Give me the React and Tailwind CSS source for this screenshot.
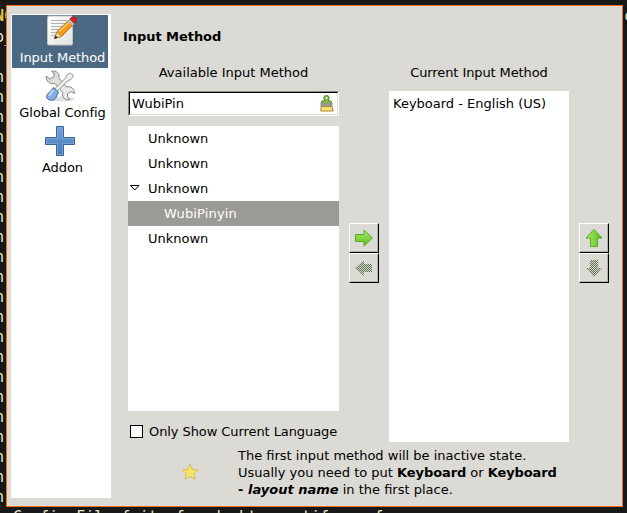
const outputRows = Array.from({ length: 22 }, () => "n");

function Terminal() {
  return (
    <div className="absolute inset-0 overflow-hidden bg-[#181818] font-['DejaVu_Sans_Mono',monospace] text-[15px] leading-[20px] text-[#eeeac8]">
      <div className="absolute top-[6px] left-[-5px] font-bold text-[#e8c84a]">NC</div>
      <div className="absolute top-[27px] left-[-5px]">o_</div>
      <div className="absolute top-[67px] left-[-5px]">
        {outputRows.map((g, i) => (
          <div key={i} className="h-[20px]">{g}</div>
        ))}
      </div>
      <div className="absolute top-[6px] left-[624px]">c</div>
      <div className="absolute top-[507px] left-[13px] whitespace-pre">Config File fcitx-freedesktop-notify.conf</div>
    </div>
  );
}

function NoteIcon() {
  return (
    <svg width="32" height="32" viewBox="0 0 32 32">
      <defs>
        <linearGradient id="pg" x1="0" y1="0" x2="1" y2="1">
          <stop offset="0" stopColor="#fff" />
          <stop offset="1" stopColor="#e2e2e0" />
        </linearGradient>
      </defs>
      <rect x="1.500" y="1" width="25" height="29" rx="1.500" fill="url(#pg)" stroke="#c3c4c0" />
      <path d="M5 5.500h16M5 8.500h14M5 11.500h12M5 14.500h10M5 17.500h7M5 20.500h4" stroke="#b0b2ae" />
      <path d="M8.500 23.500l2.500-7L23.500 4.500l4.500 4.500-12.500 12.500z" fill="#f59a1c" stroke="#a65f08" strokeWidth=".8" />
      <path d="M13 16.500L24.500 6" stroke="#ffc978" strokeWidth="1.600" />
      <path d="M8.500 23.500l2.500-6.500 4.500 4.500z" fill="#f3d9a8" stroke="#a1752d" strokeWidth=".6" />
      <path d="M8.200 23.800l1.300-3.300 2.300 2.100z" fill="#222" />
      <path d="M21.800 6l2.200-2.200 4.700 4.700-2.200 2.200z" fill="#b9bdc4" />
      <path d="M23.800 4q2.500-3.500 5.500-1.300 2.300 2.800-.7 5.800z" fill="#dc1f20" stroke="#98120f" strokeWidth=".7" />
    </svg>
  );
}

function ToolsIcon() {
  return (
    <svg width="32" height="32" viewBox="0 0 32 32">
      <defs>
        <linearGradient id="st" x1="0" y1="0" x2="1" y2="1">
          <stop offset="0" stopColor="#d3d5d0" />
          <stop offset="1" stopColor="#f1f1ee" />
        </linearGradient>
      </defs>
      <ellipse cx="18" cy="29" rx="12" ry="2.500" fill="#000" opacity=".13" />
      <path d="M2 6l4 3 4-2.500V3L7.500 1.500c5-1.500 8.500 2 7.300 6.500l7.700 9c4-1.300 8 1.500 8 6.500l-3.500-2-3.500 2v3.500l2.500 2.500c-4.500 1.300-8.500-2-7.300-7L11 13.500C6 14.800 2 11.500 2 6z" fill="url(#st)" stroke="#858882" />
      <path d="M26.500 3l3 3-2.800 3.700-2.700.8L13 21.500 10.500 19 21.500 8l1-2.800z" fill="#eeeeec" stroke="#92958e" />
      <path d="M9.500 17.500l5 4.500-3 6.500c-2 3-9 2-9-2 0-2.500 4.500-5 7-9z" fill="#87aee3" stroke="#3466a8" />
      <path d="M9.500 20l-4.500 6" stroke="#c5dbf6" strokeWidth="1.800" />
    </svg>
  );
}

function PlusIcon() {
  return (
    <svg width="32" height="32" viewBox="0 0 32 32">
      <defs>
        <linearGradient id="bl" x1="0" y1="0" x2="0" y2="1">
          <stop offset="0" stopColor="#76a3d2" />
          <stop offset="1" stopColor="#4679b5" />
        </linearGradient>
      </defs>
      <path d="M12.500 1.500h7v11h11v7h-11v11h-7v-11h-11v-7h11z" fill="url(#bl)" stroke="#3465a4" />
      <path d="M13.500 2.500h5v11h11v5h-11v11h-5v-11h-11v-5h11z" fill="none" stroke="#8bb2dc" opacity=".6" />
    </svg>
  );
}

function BrushIcon() {
  return (
    <svg width="14" height="17" viewBox="0 0 14 17">
      <path d="M4.500 6V5Q2.500 .7 6.500 .6 10.500 .7 8.500 5v1h2.500l1 2.500H1L2 6z" fill="#86b84a" stroke="#4f8a24" />
      <circle cx="6.500" cy="3" r="1" fill="#eef7e2" />
      <path d="M.5 8h12v3.500H.5z" fill="#969893" />
      <path d="M1 11.500h11l1.200 4.500H.8z" fill="#f3e07a" stroke="#b08a2c" />
    </svg>
  );
}

function Arrow({ turn, off }) {
  const id = "arrow" + turn;
  return (
    <svg width="20" height="20" viewBox="0 0 20 20">
      <defs>
        <linearGradient id={id} x1="0" y1="0" x2="0" y2="1">
          <stop offset="0" stopColor="#b0ee6c" />
          <stop offset="1" stopColor="#57bd1c" />
        </linearGradient>
        <pattern id={id + "d"} width="2" height="2" patternUnits="userSpaceOnUse">
          <path d="M0 0h1v1H0zM1 1h1v1H1z" fill="#5c7050" shapeRendering="crispEdges" />
        </pattern>
      </defs>
      <path
        transform={`rotate(${turn} 10 10)`}
        d={off ? "M2 6h8V2L19 10l-9 8V14H2z" : "M1.500 6.500h8.500V2L18.500 10 10 18v-4.500H1.500z"}
        fill={off ? `url(#${id}d)` : `url(#${id})`}
        stroke={off ? "none" : "#5aa62a"}
      />
    </svg>
  );
}

function Button({ turn, off }) {
  return (
    <div className="flex h-[30px] w-[30px] items-center justify-center border border-t-white border-r-black border-b-black border-l-white bg-[#dbdad5] shadow-[inset_-1px_-1px_0_#b4b3af]">
      <Arrow turn={turn} off={off} />
    </div>
  );
}

function NavItem({ icon, label, active }) {
  return (
    <div className={active ? "flex h-[53px] flex-col items-center bg-[#4b6983] pl-[4px] text-white" : "flex h-[55px] flex-col items-center"}>
      <div className="h-[32px]">{icon}</div>
      <div className={active ? "mt-[3px] pl-px leading-[16px] tracking-[-0.08px] whitespace-nowrap" : "mt-[3px] pl-[5px] leading-[16px] tracking-[-0.08px] whitespace-nowrap"}>{label}</div>
    </div>
  );
}

export default function App() {
  return (
    <div className="relative h-[513px] w-[627px] overflow-hidden font-['DejaVu_Sans',sans-serif] text-[13px] text-black">
      <Terminal />
      <div className="absolute top-[5px] left-[6px] flex h-[502px] w-[617px] border border-[#f36c13] bg-[#dbdad5] pt-[8px] pl-[4px]">
        <div className="h-[484px] w-[100px] shrink-0 bg-white pt-px pr-[3px] pl-px">
          <NavItem icon={<NoteIcon />} label="Input Method" active />
          <div className="h-[2px]" />
          <NavItem icon={<ToolsIcon />} label="Global Config" />
          <NavItem icon={<PlusIcon />} label="Addon" />
        </div>
        <div className="flex flex-col pl-[12px]">
          <div className="mt-[15px] h-[36px] leading-[16px] font-bold tracking-[-0.05px]">Input Method</div>
          <div className="flex pl-[5px]">
            <div className="w-[211px]">
              <div className="h-[26px] text-center leading-[16px]">Available Input Method</div>
              <div className="flex h-[25px] border border-t-[#888] border-r-white border-b-white border-l-[#888]">
                <div className="flex w-full items-center justify-between border border-t-black border-r-[#dbdad5] border-b-[#dbdad5] border-l-black bg-white pr-[3px] pl-[2px]">
                  <span>WubiPin</span>
                  <BrushIcon />
                </div>
              </div>
              <div className="mt-[10px] h-[285px] bg-white leading-[25px]">
                <div className="pl-[20px]">Unknown</div>
                <div className="pl-[20px]">Unknown</div>
                <div className="flex items-center pl-[2px]">
                  <svg width="10" height="6" viewBox="0 0 10 6" className="-mt-[2px] mr-[8px]">
                    <path d="M.5 .5h8.500L4.800 5z" fill="#fff" stroke="#000" />
                  </svg>
                  Unknown
                </div>
                <div className="bg-[#9c9a94] pl-[36px] tracking-[0.15px] text-white">WubiPinyin</div>
                <div className="pl-[20px]">Unknown</div>
              </div>
            </div>
            <div className="ml-[10px] pt-[158px]">
              <Button turn={0} />
              <Button turn={180} off />
            </div>
            <div className="ml-[10px] w-[180px]">
              <div className="h-[26px] text-center leading-[16px] tracking-[-0.1px]">Current Input Method</div>
              <div className="h-[351px] bg-white pl-[4px] leading-[25px]">Keyboard - English (US)</div>
            </div>
            <div className="ml-[10px] pt-[158px]">
              <Button turn={270} />
              <Button turn={90} off />
            </div>
          </div>
          <div className="-mt-[18px] flex items-start pl-[7px] leading-[16px] tracking-[-0.08px]">
            <div className="mt-px mr-[6px] h-[13px] w-[13px] border border-black bg-white" />
            Only Show Current Language
          </div>
          <div className="mt-[7px] flex pl-[58px]">
            <svg width="18" height="18" viewBox="0 0 18 18" className="mt-[16px] mr-[39px]">
              <path d="M9 1.300l2.300 5.100 5.500.5-4.100 3.800 1.200 5.500L9 13.400l-4.900 2.800 1.200-5.500L1.200 6.900l5.500-.5z" fill="#f9e46a" stroke="#d9bd55" strokeLinejoin="round" />
            </svg>
            <div className="leading-[17px] whitespace-nowrap">
              The first input method will be inactive state.<br />
              Usually you need to put <b className="tracking-[-0.1px]">Keyboard</b> or <b className="tracking-[-0.1px]">Keyboard</b><br />
              <b>- <i>layout name</i></b> in the first place.
            </div>
          </div>
        </div>
      </div>
    </div>
  );
}
